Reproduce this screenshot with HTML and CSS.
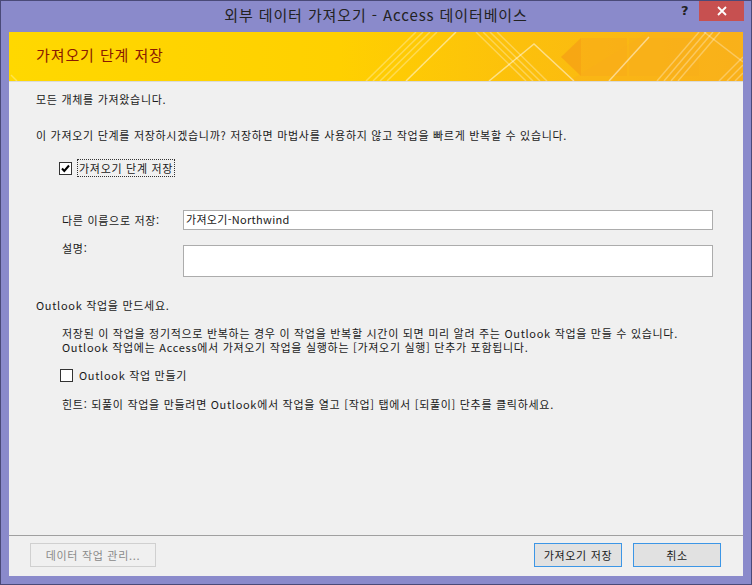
FILE: index.html
```html
<!DOCTYPE html>
<html lang="ko">
<head>
<meta charset="utf-8">
<link rel="stylesheet" href="styles.css">
</head>
<body>
<div class="window">
  <div class="titlebar">
    <div class="title">외부 데이터 가져오기 - Access 데이터베이스</div>
    <div class="help">?</div>
    <div class="close">
      <svg width="10" height="10" viewBox="0 0 10 10"><path d="M1 1L9 9M9 1L1 9" stroke="#fff" stroke-width="1.8"/></svg>
    </div>
  </div>
  <div class="client">
    <div class="banner">
      <svg class="banner-art" width="734" height="49" viewBox="0 0 734 49">
        <defs>
          <linearGradient id="bg" x1="0" y1="0" x2="1" y2="0">
            <stop offset="0" stop-color="#ffd800"/>
            <stop offset="0.45" stop-color="#ffd000"/>
            <stop offset="0.7" stop-color="#fcc00c"/>
            <stop offset="1" stop-color="#f9b01a"/>
          </linearGradient>
        </defs>
        <rect width="734" height="49" fill="url(#bg)"/>
        <polygon points="560,49 640,0 734,0 734,49" fill="#f9b21a" opacity="0.5"/>
        <polygon points="552,25 572,6 572,44" fill="#f6a015" opacity="0.75"/>
        <rect x="572" y="6" width="46" height="38" fill="#f8a91a" opacity="0.55"/>
        <rect x="620" y="6" width="70" height="38" fill="#f8ac1c" opacity="0.4"/>
        <g stroke="#fff" stroke-opacity="0.3" stroke-width="1.5">
          <line x1="357" y1="49" x2="407" y2="0"/>
          <line x1="364" y1="49" x2="414" y2="0"/>
          <line x1="371" y1="49" x2="421" y2="0"/>
          <line x1="378" y1="49" x2="428" y2="0"/>
          <line x1="467" y1="0" x2="517" y2="49"/>
          <line x1="474" y1="0" x2="524" y2="49"/>
          <line x1="481" y1="0" x2="531" y2="49"/>
          <line x1="488" y1="0" x2="538" y2="49"/>
          <line x1="648" y1="49" x2="690" y2="0"/>
          <line x1="655" y1="49" x2="697" y2="0"/>
          <line x1="662" y1="49" x2="704" y2="0"/>
          <line x1="669" y1="49" x2="711" y2="0"/>
          <line x1="695" y1="0" x2="734" y2="30"/>
          <line x1="2" y1="43" x2="8" y2="49"/>
          <line x1="710" y1="49" x2="734" y2="25"/>
          <line x1="718" y1="49" x2="734" y2="33"/>
          <line x1="726" y1="49" x2="734" y2="41"/>
        </g>
        <g stroke="#fff" stroke-opacity="0.5" stroke-width="1.5" fill="none">
          <line x1="397" y1="49" x2="447" y2="0"/>
          <polyline points="480,49 525,12 565,49"/>
          <line x1="600" y1="49" x2="640" y2="5"/>
        </g>
      </svg>
      <div class="banner-title">가져오기 단계 저장</div>
    </div>
    <div class="main">
      <p class="line l1">모든 개체를 가져왔습니다.</p>
      <p class="line l2">이 가져오기 단계를 저장하시겠습니까? 저장하면 마법사를 사용하지 않고 작업을 빠르게 반복할 수 있습니다.</p>
      <div class="check-row r1">
        <span class="checkbox checked">
          <svg width="11" height="11" viewBox="0 0 11 11"><path d="M2 5.5L4.3 8L9 2.5" stroke="#000" stroke-width="2" fill="none"/></svg>
        </span>
        <span class="check-label focused">가져오기 단계 저장</span>
      </div>
      <div class="field-row name-row">
        <span class="field-label">다른 이름으로 저장:</span>
        <div class="input">가져오기-Northwind</div>
      </div>
      <div class="field-row desc-row">
        <span class="field-label">설명:</span>
        <div class="input textarea"></div>
      </div>
      <p class="line l3">Outlook 작업을 만드세요.</p>
      <div class="para">
        <p class="para-line">저장된 이 작업을 정기적으로 반복하는 경우 이 작업을 반복할 시간이 되면 미리 알려 주는 Outlook 작업을 만들 수 있습니다.</p>
        <p class="para-line">Outlook 작업에는 Access에서 가져오기 작업을 실행하는 [가져오기 실행] 단추가 포함됩니다.</p>
      </div>
      <div class="check-row r2">
        <span class="checkbox"></span>
        <span class="check-label">Outlook 작업 만들기</span>
      </div>
      <p class="line hint">힌트: 되풀이 작업을 만들려면 Outlook에서 작업을 열고 [작업] 탭에서 [되풀이] 단추를 클릭하세요.</p>
    </div>
    <div class="footer">
      <button class="btn disabled">데이터 작업 관리...</button>
      <div class="spacer"></div>
      <button class="btn primary save">가져오기 저장</button>
      <button class="btn primary cancel">취소</button>
    </div>
  </div>
</div>
</body>
</html>
```

FILE: styles.css
```css
* { box-sizing: border-box; }
html, body { margin: 0; padding: 0; }
body {
  width: 752px;
  height: 585px;
  overflow: hidden;
  font-family: "Noto Sans CJK KR", "Noto Sans", sans-serif;
  font-size: 11px;
  letter-spacing: 0.7px;
  color: #1a1a1a;
}
.window {
  width: 752px;
  height: 585px;
  border: 1px solid #4a4a78;
  background: #8a8acb;
  padding: 0 8px 8px 8px;
  display: flex;
  flex-direction: column;
}
.titlebar {
  height: 31px;
  flex: none;
  position: relative;
}
.title {
  position: absolute;
  left: 0;
  right: 0;
  top: 4px;
  text-align: center;
  font-size: 15px;
  letter-spacing: 0.9px;
  line-height: 20px;
  color: #222;
}
.help {
  position: absolute;
  left: 672px;
  top: 2px;
  font-family: "DejaVu Sans", sans-serif;
  font-weight: bold;
  font-size: 13px;
  line-height: 16px;
  letter-spacing: 0;
  color: #222;
}
.close {
  position: absolute;
  left: 690px;
  top: 0;
  width: 45px;
  height: 20px;
  background: #c75050;
  display: flex;
  align-items: center;
  justify-content: center;
}
.client {
  flex: 1;
  background: #f0f0f0;
  display: flex;
  flex-direction: column;
}
.banner {
  height: 50px;
  flex: none;
  position: relative;
  border-bottom: 1px solid #dadada;
  overflow: hidden;
}
.banner-art {
  position: absolute;
  left: 0;
  top: 0;
  display: block;
}
.banner-title {
  position: relative;
  padding-left: 27px;
  padding-top: 13px;
  font-size: 15px;
  letter-spacing: 0.9px;
  line-height: 20px;
  color: #8a1a00;
}
.main {
  flex: 1;
  padding-left: 27px;
  padding-top: 11px;
}
.line, .para-line { margin: 0; line-height: 13px; white-space: nowrap; }
.l2 { margin-top: 23px; }
.check-row {
  display: flex;
  align-items: center;
  height: 18px;
}
.r1 { margin-top: 17px; padding-left: 23px; }
.checkbox {
  width: 13px;
  height: 13px;
  border: 1px solid #333;
  background: #fff;
  display: flex;
  align-items: center;
  justify-content: center;
  flex: none;
}
.check-label {
  margin-left: 5px;
  line-height: 16px;
  padding: 0 1px;
  border: 1px solid transparent;
}
.check-label.focused { border: 1px dotted #333; }
.field-row {
  display: flex;
  align-items: flex-start;
  padding-left: 26px;
}
.field-label { width: 121px; flex: none; line-height: 13px; }
.name-row { margin-top: 33px; height: 20px; align-items: center; }
.input {
  width: 530px;
  height: 20px;
  background: #fff;
  border: 1px solid #acacac;
  padding-left: 2px;
  line-height: 17px;
  font-size: 11px;
  letter-spacing: 0.3px;
}
.desc-row { margin-top: 15px; }
.desc-row .field-label { margin-top: -3px; }
.textarea { height: 32px; }
.l3 { margin-top: 22px; }
.para {
  margin-top: 15px;
  padding-left: 26px;
  display: flex;
  flex-direction: column;
  gap: 1px;
}
.r2 { margin-top: 12px; padding-left: 24px; }
.r2 .check-label { margin-left: 4px; }
.hint { margin-top: 14px; padding-left: 26px; }
.footer {
  flex: none;
  height: 41px;
  border-top: 1px solid #a0a0a0;
  display: flex;
  align-items: flex-start;
  padding: 7px 22px 0 21px;
}
.spacer { flex: 1; }
.btn {
  font-family: "Noto Sans CJK KR", "Noto Sans", sans-serif;
  font-size: 11px;
  letter-spacing: 0.7px;
  height: 24px;
  background: #e1e1e1;
  border: 1px solid #adadad;
  color: #1a1a1a;
  padding: 0;
  margin: 0;
}
.btn.disabled {
  width: 126px;
  background: #f0f0f0;
  border-color: #d0d0d0;
  color: #8a8a8a;
}
.btn.primary { border-color: #3c96e6; }
.save { width: 88px; }
.cancel { width: 88px; margin-left: 11px; }
```
